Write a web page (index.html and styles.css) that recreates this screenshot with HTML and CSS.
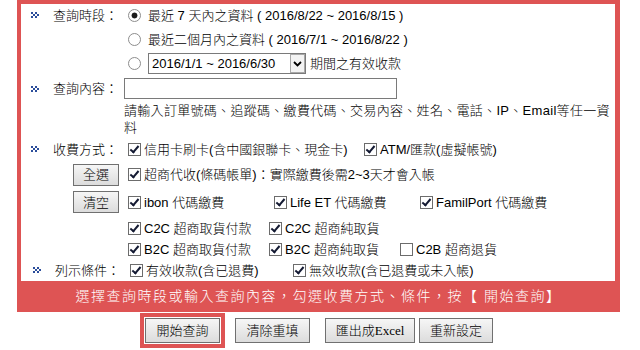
FILE: index.html
```html
<!DOCTYPE html>
<html lang="zh-Hant">

<head>
  <meta charset="UTF-8">
  <meta name="viewport" content="width=device-width, initial-scale=1.0">
  <title>收款查詢</title>
  <link rel="stylesheet" href="styles.css">
</head>

<body>
  <form class="query-form">
    <div class="query-box">

      <!-- 查詢時段 -->
      <div class="row h22">
        <div class="cell-label"><svg class="bullet" width="8" height="6" viewBox="0 0 8 6"><path d="M0 0h2v2H0zM4 0h2v2H4zM2 2h2v2H2zM6 2h2v2H6zM0 4h2v2H0zM4 4h2v2H4z" fill="#2b4d9b"/></svg>查詢時段：</div>
        <div class="opts"><label class="opt"><input class="radio" type="radio" name="period" checked>最近 7 天內之資料 ( 2016/8/22 ~ 2016/8/15 )</label></div>
      </div>
      <div class="row h26">
        <div></div>
        <div class="opts"><label class="opt"><input class="radio" type="radio" name="period">最近二個月內之資料 ( 2016/7/1 ~ 2016/8/22 )</label></div>
      </div>
      <div class="row h23">
        <div></div>
        <div class="opts">
          <input class="radio" type="radio" name="period">
          <span class="range-select">
            <select>
              <option>2016/1/1 ~ 2016/6/30</option>
            </select>
            <span class="arrow"><svg width="9" height="6" viewBox="0 0 9 6"><path d="M1 1l3.5 3.5L8 1" fill="none" stroke="#000" stroke-width="1.8"/></svg></span>
          </span>
          期間之有效收款
        </div>
      </div>

      <!-- 查詢內容 -->
      <div class="row h27">
        <div class="cell-label"><svg class="bullet" width="8" height="6" viewBox="0 0 8 6"><path d="M0 0h2v2H0zM4 0h2v2H4zM2 2h2v2H2zM6 2h2v2H6zM0 4h2v2H0zM4 4h2v2H4z" fill="#2b4d9b"/></svg>查詢內容：</div>
        <div><input class="keyword" type="text"></div>
      </div>
      <div class="row h34 top">
        <div></div>
        <div class="hint">請輸入訂單號碼、追蹤碼、繳費代碼、交易內容、姓名、電話、IP、Email等任一資料</div>
      </div>

      <!-- 收費方式 -->
      <div class="row h26">
        <div class="cell-label"><svg class="bullet" width="8" height="6" viewBox="0 0 8 6"><path d="M0 0h2v2H0zM4 0h2v2H4zM2 2h2v2H2zM6 2h2v2H6zM0 4h2v2H0zM4 4h2v2H4z" fill="#2b4d9b"/></svg>收費方式：</div>
        <div class="opts">
          <label class="opt w240"><input class="check" type="checkbox" checked>信用卡刷卡(含中國銀聯卡、現金卡)</label>
          <label class="opt"><input class="check" type="checkbox" checked>ATM/匯款(虛擬帳號)</label>
        </div>
      </div>
      <div class="row h25">
        <div class="cell-side"><button type="button" class="btn btn-side">全選</button></div>
        <div class="opts">
          <label class="opt"><input class="check" type="checkbox" checked>超商代收(條碼帳單)：實際繳費後需2~3天才會入帳</label>
        </div>
      </div>
      <div class="row h30">
        <div class="cell-side"><button type="button" class="btn btn-side">清空</button></div>
        <div class="opts">
          <label class="opt w150"><input class="check" type="checkbox" checked>ibon 代碼繳費</label>
          <label class="opt w146"><input class="check" type="checkbox" checked>Life ET 代碼繳費</label>
          <label class="opt"><input class="check" type="checkbox" checked>FamilPort 代碼繳費</label>
        </div>
      </div>
      <div class="row h22">
        <div></div>
        <div class="opts">
          <label class="opt w145"><input class="check" type="checkbox" checked>C2C 超商取貨付款</label>
          <label class="opt"><input class="check" type="checkbox" checked>C2C 超商純取貨</label>
        </div>
      </div>
      <div class="row h20">
        <div></div>
        <div class="opts">
          <label class="opt w145"><input class="check" type="checkbox" checked>B2C 超商取貨付款</label>
          <label class="opt w131"><input class="check" type="checkbox" checked>B2C 超商純取貨</label>
          <label class="opt"><input class="check" type="checkbox">C2B 超商退貨</label>
        </div>
      </div>

      <!-- 列示條件 -->
      <div class="row h22 row-list">
        <div class="cell-label"><svg class="bullet" width="8" height="6" viewBox="0 0 8 6"><path d="M0 0h2v2H0zM4 0h2v2H4zM2 2h2v2H2zM6 2h2v2H6zM0 4h2v2H0zM4 4h2v2H4z" fill="#2b4d9b"/></svg>列示條件：</div>
        <div class="opts">
          <label class="opt w169"><input class="check" type="checkbox" checked>有效收款(含已退費)</label>
          <label class="opt"><input class="check" type="checkbox" checked>無效收款(含已退費或未入帳)</label>
        </div>
      </div>
    </div>

    <div class="notice">選擇查詢時段或輸入查詢內容，勾選收費方式、條件，按【 開始查詢】</div>

    <div class="actions">
      <span class="primary-wrap"><button type="submit" class="btn btn-main">開始查詢</button></span>
      <button type="reset" class="btn btn-main">清除重填</button>
      <button type="button" class="btn btn-main btn-export">匯出成<span class="latin-serif">Excel</span></button>
      <button type="button" class="btn btn-main btn-reset">重新設定</button>
    </div>
  </form>
</body>

</html>
```

FILE: styles.css
```css
body {
  margin: 0;
  font-family: "Liberation Sans", "Noto Sans CJK TC", sans-serif;
  font-size: 13px;
  font-weight: 300;
  line-height: 17px;
  color: #000;
  background: #fff;
}

.query-form {
  width: 603px;
  margin-left: 17px;
}

.query-box {
  border: 4px solid #de5454;
  border-right-width: 5px;
  border-bottom: none;
}

.row {
  display: grid;
  grid-template-columns: 103px 1fr;
  align-items: center;
}

.row.top {
  align-items: start;
}

.h20 { height: 20px; }
.h22 { height: 22px; }
.h23 { height: 23px; }
.h25 { height: 25px; }
.h26 { height: 26px; }
.h27 { height: 27px; }
.h30 { height: 30px; }
.h34 { height: 34px; }

.cell-label {
  display: flex;
  align-items: center;
  padding-left: 10px;
}

.bullet {
  flex: none;
  margin-right: 14px;
}

.row-list .cell-label {
  padding-left: 12px;
}

.cell-side {
  display: flex;
  justify-content: flex-end;
  padding-right: 5px;
}

.opts {
  display: flex;
  align-items: center;
  white-space: nowrap;
}

.opt {
  display: inline-flex;
  align-items: center;
}

/* first checkbox of a row sits 4px in from the column edge */
.opts .opt:first-child .check {
  margin-left: 4px;
}

.row-list .opts .opt:first-child .check {
  margin-left: 6px;
}

.w240 { width: 240px; }
.w150 { width: 150px; }
.w146 { width: 146px; }
.w145 { width: 145px; }
.w131 { width: 131px; }
.w169 { width: 169px; }

.radio {
  appearance: none;
  flex: none;
  width: 13px;
  height: 13px;
  margin: 0 7px 0 4px;
  border: 1px solid #8d8d8d;
  border-radius: 50%;
  background: #fff;
}

.radio:checked {
  background: radial-gradient(circle, #1b1b1b 0 2.6px, #fff 3.3px);
}

.check {
  appearance: none;
  position: relative;
  flex: none;
  width: 13px;
  height: 13px;
  margin: 0 3px 0 0;
  border: 1px solid #6c6c6c;
  background: #fff;
}

.check:checked::after {
  content: "";
  position: absolute;
  left: 3px;
  top: 0;
  width: 3px;
  height: 7px;
  border: solid #141a33;
  border-width: 0 2px 2px 0;
  transform: rotate(40deg);
}

.range-select {
  position: relative;
  display: inline-block;
  height: 21px;
  margin-right: 4px;
}

.range-select select {
  appearance: none;
  display: block;
  width: 158px;
  height: 21px;
  margin: 0;
  padding: 0 18px 0 3px;
  border: 1px solid #7a7a7a;
  border-radius: 0;
  background: #fff;
  font: inherit;
  color: #000;
}

.range-select .arrow {
  position: absolute;
  top: 1px;
  right: 1px;
  bottom: 1px;
  width: 13px;
  border: 1px solid #a8a8a8;
  background: #f3f3f3;
  display: flex;
  align-items: center;
  justify-content: center;
  pointer-events: none;
}

.keyword {
  display: block;
  box-sizing: border-box;
  width: 273px;
  height: 21px;
  margin: 0;
  border: 1px solid #7a7a7a;
  font: inherit;
}

.hint {
  width: 486px;
  letter-spacing: 0.3px;
}

.btn {
  font: inherit;
  color: #000;
  padding: 0;
  border: 1px solid #707070;
  border-radius: 0;
  background: linear-gradient(#f6f6f6, #dcdcdc);
  cursor: pointer;
}

.btn-side {
  width: 46px;
  height: 22px;
}

.notice {
  height: 31px;
  line-height: 31px;
  background: #de5454;
  color: #fff;
  font-size: 14px;
  letter-spacing: 1.5px;
  text-align: center;
}

.actions {
  display: flex;
  justify-content: center;
  align-items: center;
  padding-top: 1px;
  padding-right: 4px;
}

.primary-wrap {
  display: flex;
  padding: 5px;
  background: #de5454;
  margin-right: 10px;
}

.primary-wrap .btn {
  outline: 1px solid #fff;
}

.btn-main {
  width: 75px;
  height: 25px;
}

.btn-export {
  width: 90px;
  margin-left: 15px;
  margin-right: 4px;
}

.btn-reset {
  width: 74px;
}

.latin-serif {
  font-family: "Liberation Serif", serif;
}
```
